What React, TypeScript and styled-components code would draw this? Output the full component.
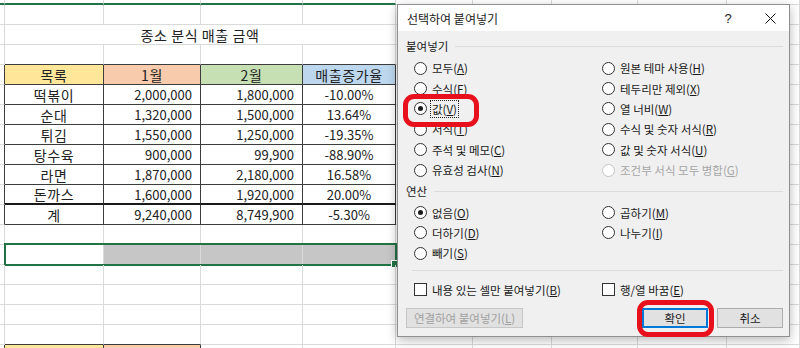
import React from "react";
import styled, { createGlobalStyle, css } from "styled-components";

const GlobalStyle = createGlobalStyle`
  html, body { margin: 0; padding: 0; background: #fff; }
  body { width: 800px; height: 348px; overflow: hidden; font-family: "Noto Sans CJK KR", "Noto Sans", sans-serif; }
  #root { width: 800px; height: 348px; }
`;

const COLS = "5px 99px 97px 102px 93px 77px 79px 86px 89px 1fr";
const NCOLS = 10;
const GRID = "#dadada";
const INK = "#3c3c3c";
const GREEN = "#217346";
const RED = "#e8101c";
const FONT = `"Noto Sans CJK KR", "Noto Sans", sans-serif`;

const Stage = styled.div`
  position: relative;
  width: 800px;
  height: 348px;
  overflow: hidden;
  background: #fff;
`;

/* ---------- spreadsheet ---------- */

const Sheet = styled.div`
  display: flex;
  flex-direction: column;
  font-family: ${FONT};
  color: #222;
`;

const Row = styled.div<{ $h?: number }>`
  position: relative;
  display: grid;
  grid-template-columns: ${COLS};
  height: ${(p) => p.$h ?? 20}px;
  flex: none;
`;

type Align = "left" | "center" | "right";

const Cell = styled.div<{
  $bg?: string;
  $align?: Align;
  $ink?: boolean;
  $inkRight?: boolean;
  $inkBottom?: boolean;
  $thickBottom?: boolean;
  $greenBottom?: boolean;
  $span?: number;
  $num?: boolean;
}>`
  box-sizing: border-box;
  min-width: 0;
  grid-column: span ${(p) => p.$span ?? 1};
  border-right: 1px solid ${(p) => (p.$ink || p.$inkRight ? INK : GRID)};
  border-bottom: ${(p) =>
    p.$greenBottom
      ? `2px solid ${GREEN}`
      : p.$thickBottom
      ? `2px solid #1a1a1a`
      : `1px solid ${p.$ink || p.$inkBottom ? INK : GRID}`};
  background: ${(p) => p.$bg ?? "transparent"};
  display: flex;
  align-items: center;
  justify-content: ${(p) =>
    p.$align === "right" ? "flex-end" : p.$align === "left" ? "flex-start" : "center"};
  padding-right: ${(p) => (p.$align === "right" ? 8 : 0)}px;
  font-size: ${(p) => (p.$num ? 13 : 14)}px;
  letter-spacing: ${(p) => (p.$num ? 0 : 0.6)}px;
  line-height: 1;
  white-space: nowrap;
  overflow: hidden;
`;

const SelectionFrame = styled.div`
  position: absolute;
  left: 4px;
  top: -2px;
  width: 393px;
  height: 23px;
  box-sizing: border-box;
  border: 2px solid ${GREEN};
  pointer-events: none;
`;

const FillHandle = styled.div`
  position: absolute;
  right: -4px;
  bottom: -4px;
  width: 6px;
  height: 6px;
  background: ${GREEN};
  border: 1px solid #fff;
`;

type CellSpec = {
  text?: string;
  bg?: string;
  align?: Align;
  ink?: boolean;
  inkRight?: boolean;
  inkBottom?: boolean;
  thickBottom?: boolean;
  greenBottom?: boolean;
  span?: number;
  num?: boolean;
};

type RowSpec = { h?: number; cells: CellSpec[]; selected?: boolean };

const YELLOW = "#ffe699";
const ORANGE = "#f8cbad";
const LGREEN = "#c6e0b4";
const BLUE = "#bdd7ee";
const SEL = "#c6c6c6";

const data: [string, string, string, string][] = [
  ["떡볶이", "2,000,000", "1,800,000", "-10.00%"],
  ["순대", "1,320,000", "1,500,000", "13.64%"],
  ["튀김", "1,550,000", "1,250,000", "-19.35%"],
  ["탕수육", "900,000", "99,900", "-88.90%"],
  ["라면", "1,870,000", "2,180,000", "16.58%"],
  ["돈까스", "1,600,000", "1,920,000", "20.00%"],
];

const tableRow = (r: [string, string, string, string], thick = false): RowSpec => ({
  cells: [
    { inkRight: true },
    { text: r[0], ink: true, thickBottom: thick },
    { text: r[1], ink: true, align: "right", num: true, thickBottom: thick },
    { text: r[2], ink: true, align: "right", num: true, thickBottom: thick },
    { text: r[3], ink: true, num: true, thickBottom: thick },
  ],
});

const rows: RowSpec[] = [
  { h: 5, cells: [0, 1, 2, 3, 4].map(() => ({ greenBottom: true })) },
  { cells: [] },
  { cells: [{}, { text: "종소 분식 매출 금액", span: 4 }] },
  { cells: [{}, { inkBottom: true }, { inkBottom: true }, { inkBottom: true }, { inkBottom: true }] },
  {
    cells: [
      { inkRight: true },
      { text: "목록", ink: true, bg: YELLOW },
      { text: "1월", ink: true, bg: ORANGE },
      { text: "2월", ink: true, bg: LGREEN },
      { text: "매출증가율", ink: true, bg: BLUE },
    ],
  },
  ...data.map((r, i) => tableRow(r, i === data.length - 1)),
  tableRow(["계", "9,240,000", "8,749,900", "-5.30%"]),
  { cells: [] },
  { selected: true, cells: [{}, {}, { bg: SEL }, { bg: SEL }, { bg: SEL }] },
  { cells: [] },
  { cells: [] },
  { cells: [] },
  { cells: [{}, { inkBottom: true }, { inkBottom: true }] },
  { cells: [{ inkRight: true }, { ink: true, bg: YELLOW }, { ink: true, bg: ORANGE }] },
];

const SheetRow: React.FC<{ spec: RowSpec }> = ({ spec }) => {
  const used = spec.cells.reduce((n, c) => n + (c.span ?? 1), 0);
  const fill: CellSpec[] = Array.from({ length: Math.max(0, NCOLS - used) }, () => ({}));
  const all = [...spec.cells, ...fill];
  return (
    <Row $h={spec.h}>
      {all.map((c, i) => (
        <Cell
          key={i}
          $bg={c.bg}
          $align={c.align}
          $ink={c.ink}
          $inkRight={c.inkRight}
          $inkBottom={c.inkBottom}
          $thickBottom={c.thickBottom}
          $greenBottom={c.greenBottom}
          $span={c.span}
          $num={c.num}
        >
          {c.text}
        </Cell>
      ))}
      {spec.selected && (
        <SelectionFrame>
          <FillHandle />
        </SelectionFrame>
      )}
    </Row>
  );
};

/* ---------- dialog ---------- */

const Dialog = styled.div`
  position: absolute;
  left: 397px;
  top: 4px;
  width: 393px;
  height: 333px;
  box-sizing: border-box;
  border: 1px solid #8f8f8f;
  background: #f0f0f0;
  box-shadow: 0 3px 10px rgba(0, 0, 0, 0.28);
  display: flex;
  flex-direction: column;
  font-family: ${FONT};
  font-size: 11.5px;
  color: #1a1a1a;
`;

const TitleBar = styled.div`
  height: 26px;
  flex: none;
  background: #fff;
  display: flex;
  align-items: center;
  padding-left: 9px;
  font-size: 12px;
`;

const TitleText = styled.span`
  flex: 1;
`;

const TitleButton = styled.span<{ $w: number }>`
  width: ${(p) => p.$w}px;
  height: 26px;
  display: flex;
  align-items: center;
  justify-content: center;
  font-size: 13px;
  font-family: "Liberation Sans", sans-serif;
`;

const Body = styled.div`
  display: flex;
  flex-direction: column;
  padding: 7px 6px 0 8px;
`;

const GroupHeader = styled.div<{ $mt?: number }>`
  display: flex;
  align-items: center;
  gap: 7px;
  height: 16px;
  margin-top: ${(p) => p.$mt ?? 0}px;
`;

const GroupLine = styled.div`
  flex: 1;
  height: 1px;
  background: #dcdcdc;
`;

const Options = styled.div<{ $rows: number; $mt: number }>`
  display: grid;
  grid-template-columns: 188px 1fr;
  grid-template-rows: repeat(${(p) => p.$rows}, 20.4px);
  grid-auto-flow: column;
  margin: ${(p) => p.$mt}px 0 0 8px;
`;

const Option = styled.div<{ $disabled?: boolean }>`
  display: flex;
  align-items: center;
  gap: 5px;
  color: ${(p) => (p.$disabled ? "#a6a6a6" : "#1a1a1a")};
  white-space: nowrap;
`;

const RadioCircle = styled.span<{ $checked?: boolean; $disabled?: boolean }>`
  width: 13px;
  height: 13px;
  box-sizing: border-box;
  border-radius: 50%;
  border: 1px solid ${(p) => (p.$disabled ? "#c4c4c4" : "#333")};
  background: #fff;
  display: flex;
  align-items: center;
  justify-content: center;
  flex: none;
  ${(p) =>
    p.$checked &&
    css`
      &::after {
        content: "";
        width: 5px;
        height: 5px;
        border-radius: 50%;
        background: #1a1a1a;
      }
    `}
`;

const CheckBox = styled.span`
  width: 13px;
  height: 13px;
  box-sizing: border-box;
  border: 1px solid #333;
  background: #fff;
  flex: none;
`;

const Label = styled.span<{ $focus?: boolean }>`
  line-height: 14px;
  ${(p) =>
    p.$focus &&
    css`
      outline: 1px dotted #222;
      outline-offset: 1px;
    `}
`;

const Separator = styled.div`
  height: 1px;
  background: #dcdcdc;
  margin: 6px 0 0 6px;
`;

const CheckRow = styled.div`
  display: grid;
  grid-template-columns: 188px 1fr;
  height: 20px;
  margin: 9px 0 0 8px;
`;

const ButtonRow = styled.div`
  display: flex;
  align-items: center;
  gap: 9px;
  margin-top: 8px;
  height: 20px;
`;

const Spacer = styled.div`
  flex: 1;
`;

const Button = styled.div<{ $w: number; $default?: boolean; $disabled?: boolean }>`
  width: ${(p) => p.$w}px;
  height: 20px;
  box-sizing: border-box;
  display: flex;
  align-items: center;
  justify-content: center;
  background: #e1e1e1;
  border: 1px solid ${(p) => (p.$default ? "#0078d7" : p.$disabled ? "#c6c6c6" : "#adadad")};
  ${(p) =>
    p.$default &&
    css`
      box-shadow: inset 0 0 0 1px #0078d7;
    `}
  color: ${(p) => (p.$disabled ? "#a0a0a0" : "#1a1a1a")};
  white-space: nowrap;
`;

const Highlight = styled.div<{ $x: number; $y: number; $w: number; $h: number }>`
  position: absolute;
  left: ${(p) => p.$x}px;
  top: ${(p) => p.$y}px;
  width: ${(p) => p.$w}px;
  height: ${(p) => p.$h}px;
  box-sizing: border-box;
  border: 5px solid ${RED};
  border-radius: 11px;
  pointer-events: none;
`;

type Opt = { text: string; key: string; checked?: boolean; focus?: boolean; disabled?: boolean };

const pasteOpts: Opt[] = [
  { text: "모두", key: "A" },
  { text: "수식", key: "F" },
  { text: "값", key: "V", checked: true, focus: true },
  { text: "서식", key: "T" },
  { text: "주석 및 메모", key: "C" },
  { text: "유효성 검사", key: "N" },
  { text: "원본 테마 사용", key: "H" },
  { text: "테두리만 제외", key: "X" },
  { text: "열 너비", key: "W" },
  { text: "수식 및 숫자 서식", key: "R" },
  { text: "값 및 숫자 서식", key: "U" },
  { text: "조건부 서식 모두 병합", key: "G", disabled: true },
];

const opOpts: Opt[] = [
  { text: "없음", key: "O", checked: true },
  { text: "더하기", key: "D" },
  { text: "빼기", key: "S" },
  { text: "곱하기", key: "M" },
  { text: "나누기", key: "I" },
];

const Mn: React.FC<{ text: string; k: string }> = ({ text, k }) => (
  <>
    {text}(<u>{k}</u>)
  </>
);

const RadioOption: React.FC<{ o: Opt }> = ({ o }) => (
  <Option $disabled={o.disabled}>
    <RadioCircle $checked={o.checked} $disabled={o.disabled} />
    <Label $focus={o.focus}>
      <Mn text={o.text} k={o.key} />
    </Label>
  </Option>
);

const CloseIcon = () => (
  <svg width="11" height="11" viewBox="0 0 11 11">
    <path d="M0.5 0.5 L10.5 10.5 M10.5 0.5 L0.5 10.5" stroke="#111" strokeWidth="1" fill="none" />
  </svg>
);

export default function App() {
  return (
    <Stage>
      <GlobalStyle />
      <Sheet>
        {rows.map((r, i) => (
          <SheetRow key={i} spec={r} />
        ))}
      </Sheet>

      <Dialog>
        <TitleBar>
          <TitleText>선택하여 붙여넣기</TitleText>
          <TitleButton $w={46}>?</TitleButton>
          <TitleButton $w={38}>
            <CloseIcon />
          </TitleButton>
        </TitleBar>
        <Body>
          <GroupHeader>
            <span>붙여넣기</span>
            <GroupLine />
          </GroupHeader>
          <Options $rows={6} $mt={4}>
            {pasteOpts.map((o) => (
              <RadioOption key={o.key} o={o} />
            ))}
          </Options>
          <GroupHeader $mt={3}>
            <span>연산</span>
            <GroupLine />
          </GroupHeader>
          <Options $rows={3} $mt={3}>
            {opOpts.map((o) => (
              <RadioOption key={o.key} o={o} />
            ))}
          </Options>
          <Separator />
          <CheckRow>
            <Option>
              <CheckBox />
              <Label>
                <Mn text="내용 있는 셀만 붙여넣기" k="B" />
              </Label>
            </Option>
            <Option>
              <CheckBox />
              <Label>
                <Mn text="행/열 바꿈" k="E" />
              </Label>
            </Option>
          </CheckRow>
          <ButtonRow>
            <Button $w={117} $disabled>
              <Mn text="연결하여 붙여넣기" k="L" />
            </Button>
            <Spacer />
            <Button $w={66} $default>
              확인
            </Button>
            <Button $w={66}>취소</Button>
          </ButtonRow>
        </Body>
      </Dialog>

      <Highlight $x={403} $y={94} $w={76} $h={33} />
      <Highlight $x={637} $y={300} $w={77} $h={37} />
    </Stage>
  );
}
